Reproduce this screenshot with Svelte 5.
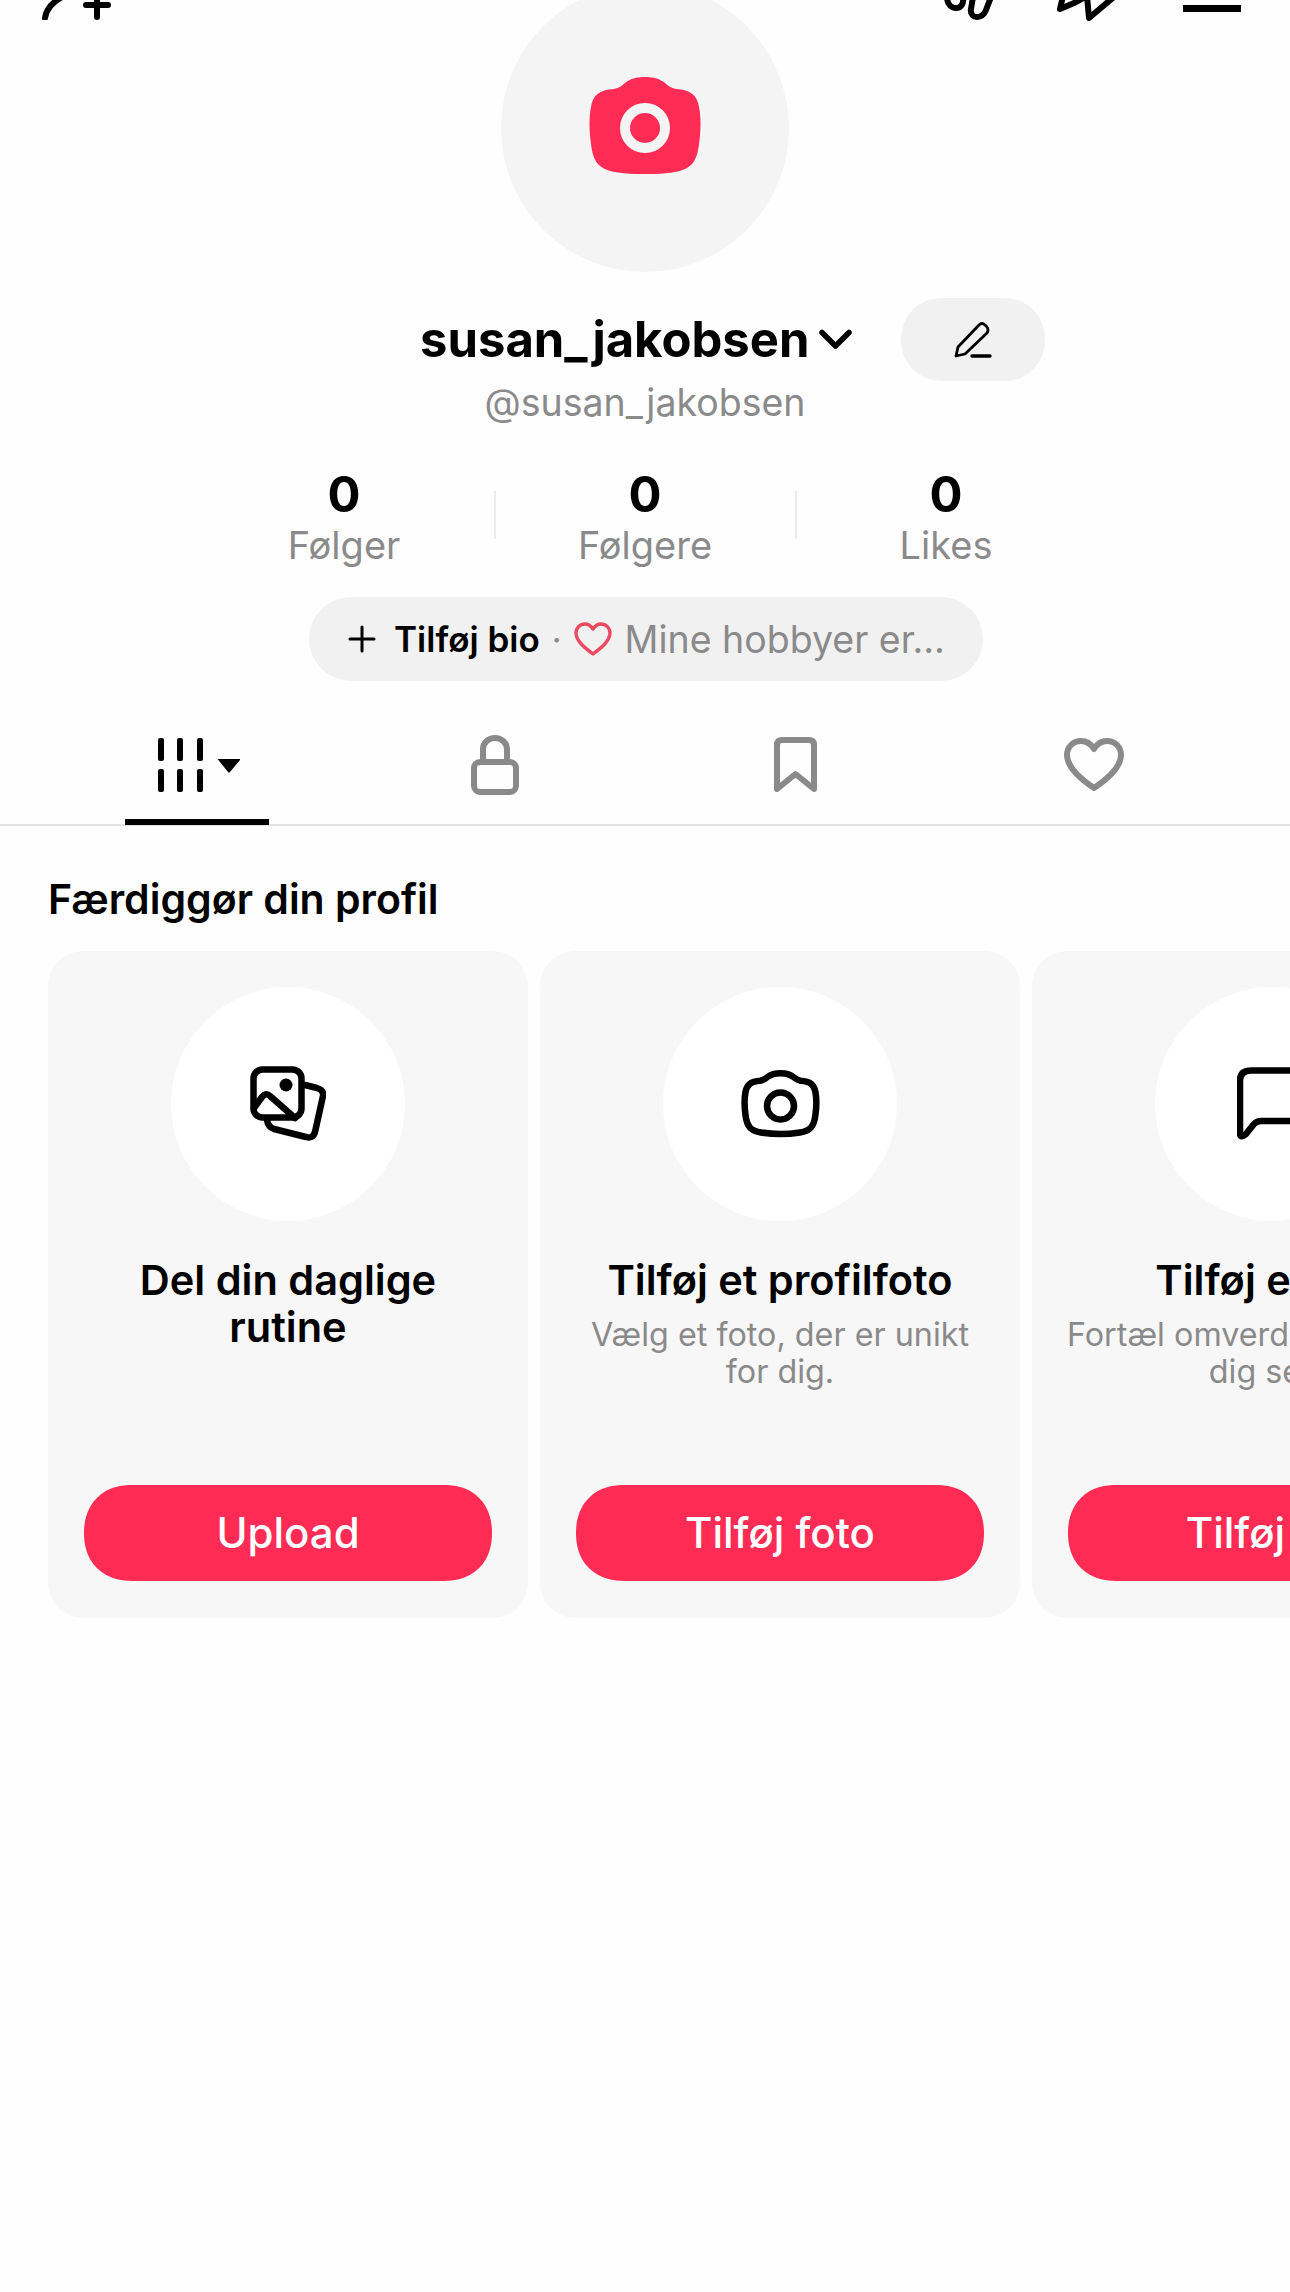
<script>
  const stats = [
    { n: '0', label: 'Følger' },
    { n: '0', label: 'Følgere' },
    { n: '0', label: 'Likes' }
  ];
  const camPath = 'M39.5 3.25C33.7 3.25 29.8 4.5 26.5 7C24.6 8.9 22.7 10.1 19.4 10.7C9.7 11.4 5.8 14.5 4.5 22C3.25 28.2 3.25 35.7 4.5 45C5.8 56.3 9.7 60.7 20 62.5C31.7 64.4 47.2 64.4 58.9 62.5C69.3 60.7 73.1 56.3 74.4 45C75.7 35.7 75.7 28.2 74.4 22C73.1 14.5 69.3 11.4 59.5 10.7C56.3 10.1 54.4 8.9 52.4 7C49.2 4.5 45.3 3.25 39.5 3.25Z';
</script>

<div class="page">
  <header class="topbar">
    <svg class="t-add" width="70" height="20" viewBox="0 0 70 20" fill="none" stroke="#000" stroke-width="6" stroke-linecap="round">
      <path d="M3 18C4 10 9 3 20 -3" />
      <path d="M44 5H66M55 -6V17" />
    </svg>
    <div class="t-right">
      <svg class="t-loops" width="52" height="20" viewBox="0 0 52 20" fill="none" stroke="#000" stroke-width="6" stroke-linecap="round">
        <path d="M3 -3C3 5 8 8 12 8C17 8 20 4 19 -3" />
        <path d="M29 -3L27 9C26 15 30 17 33 17C37 17 40 15 42 10L47 -3" />
      </svg>
      <svg class="t-share" width="60" height="21" viewBox="0 0 60 21" fill="none" stroke="#000" stroke-width="6" stroke-linecap="round" stroke-linejoin="round">
        <path d="M6 -4L3 9L17 3L30 -4L32 18L58 -4" />
      </svg>
      <div class="t-bar"></div>
    </div>
  </header>

  <div class="avatar">
    <svg width="112" height="97" viewBox="0 0 112 97">
      <path fill="#fe2c55" d="M56 0C47 0 41 2 36 6C33 9 30 11 25 12C10 13 4 18 2 30C0 40 0 52 2 67C4 85 10 92 26 95C44 98 68 98 86 95C102 92 108 85 110 67C112 52 112 40 110 30C108 18 102 13 87 12C82 11 79 9 76 6C71 2 65 0 56 0Z" />
      <circle cx="56" cy="51" r="20" fill="none" stroke="#f4f4f5" stroke-width="10" />
    </svg>
  </div>

  <div class="name-row">
    <h1 class="name">susan_jakobsen</h1>
    <svg class="chev" width="33" height="21" viewBox="0 0 33 21" fill="none" stroke="#000" stroke-width="5.5" stroke-linecap="round" stroke-linejoin="round">
      <path d="M3 3.5L16.5 17L30 3.5" />
    </svg>
    <button class="edit" aria-label="Rediger">
      <svg width="38" height="36" viewBox="0 0 38 36" fill="none" stroke="#000" stroke-width="2.8" stroke-linecap="round" stroke-linejoin="round">
        <path d="M2 34L4 25L25 3Q28 0 31 3L33 5Q35 8 33 11L11 32Z" />
        <path d="M18 34H36" stroke-width="3.4" />
      </svg>
    </button>
  </div>

  <p class="handle">@susan_jakobsen</p>

  <div class="stats">
    {#each stats as s, i}
      {#if i > 0}<span class="sep"></span>{/if}
      <div class="stat">
        <strong>{s.n}</strong>
        <span>{s.label}</span>
      </div>
    {/each}
  </div>

  <div class="bio">
    <svg width="28" height="28" viewBox="0 0 28 28" fill="none" stroke="#000" stroke-width="3" stroke-linecap="round">
      <path d="M2 14H26M14 2V26" />
    </svg>
    <b>Tilføj bio</b>
    <span class="dot">·</span>
    <svg width="38" height="34" viewBox="0 0 38 34" fill="none" stroke="#ea4a62" stroke-width="3.4" stroke-linejoin="round">
      <path d="M19 32C11 26 2 19 2 11C2 6 6 2 11 2C15 2 17 4 19 7C21 4 23 2 27 2C32 2 36 6 36 11C36 19 27 26 19 32Z" />
    </svg>
    <span class="hint">Mine hobbyer er...</span>
  </div>

  <nav class="tabs">
    <div class="tab active">
      <svg width="84" height="56" viewBox="0 0 84 56">
        <g fill="#000">
          <rect x="2" y="0" width="6" height="23" rx="2" />
          <rect x="21" y="0" width="6" height="23" rx="2" />
          <rect x="41" y="0" width="6" height="23" rx="2" />
          <rect x="2" y="31" width="6" height="23" rx="2" />
          <rect x="21" y="31" width="6" height="23" rx="2" />
          <rect x="41" y="31" width="6" height="23" rx="2" />
          <path d="M62 21.5Q61 21 62 21H84Q85 21 84 22L74 34Q73 35 72 34Z" />
        </g>
      </svg>
    </div>
    <div class="tab">
      <svg width="48" height="60" viewBox="0 0 48 60" fill="none" stroke="#8a8a8a" stroke-width="6">
        <path d="M12 27V14A12 11 0 0 1 36 14V27" />
        <rect x="3" y="27" width="42" height="30" rx="6" />
      </svg>
    </div>
    <div class="tab">
      <svg width="43" height="55" viewBox="0 0 43 55" fill="none" stroke="#8a8a8a" stroke-width="6" stroke-linejoin="round">
        <path d="M3 8Q3 3 8 3H35Q40 3 40 8V52L21.5 37L3 52Z" />
      </svg>
    </div>
    <div class="tab tab-heart">
      <svg width="60" height="54" viewBox="0 0 60 54" fill="none" stroke="#8a8a8a" stroke-width="6" stroke-linejoin="round">
        <path d="M30 50C18 42 3 30 3 17C3 9 9 3 17 3C23 3 27 6 30 11C33 6 37 3 43 3C51 3 57 9 57 17C57 30 42 42 30 50Z" />
      </svg>
    </div>
  </nav>

  <h2 class="section">Færdiggør din profil</h2>

  <div class="cards">
    <article class="card">
      <div class="circle">
        <svg width="76" height="76" viewBox="0 0 76 76" fill="none" stroke="#000" stroke-width="6.5" stroke-linecap="round" stroke-linejoin="round">
          <rect x="3.5" y="3.5" width="48" height="48" rx="9" />
          <circle cx="36" cy="19" r="6.5" fill="#000" stroke="none" />
          <path d="M4 42L12 31Q16 26 20 30L45 52" />
          <path d="M55 19L67 22Q74 24 73 30L65 66Q63 73 56 71L24 63Q18 61 17 54" />
        </svg>
      </div>
      <h3>Del din daglige rutine</h3>
      <button class="cta">Upload</button>
    </article>

    <article class="card">
      <div class="circle">
        <svg width="79" height="68" viewBox="0 0 79 68" fill="none" stroke="#000" stroke-width="6.5">
          <path d={camPath} />
          <circle cx="39.5" cy="36" r="13.5" />
        </svg>
      </div>
      <h3>Tilføj et profilfoto</h3>
      <p>Vælg et foto, der er unikt for dig.</p>
      <button class="cta">Tilføj foto</button>
    </article>

    <article class="card">
      <div class="circle">
        <svg class="bubble" width="80" height="75" viewBox="0 0 80 75" fill="none" stroke="#000" stroke-width="6.5" stroke-linejoin="round">
          <path d="M14 3.5H66Q77 3.5 77 14V43Q77 54 66 54H24Q20 54 17 57L9 67Q3 72 3 66V14Q3 3.5 14 3.5Z" />
        </svg>
      </div>
      <h3>Tilføj en bio</h3>
      <p class="nowrap">Fortæl omverdenen lidt om<br />dig selv.</p>
      <button class="cta">Tilføj bio</button>
    </article>
  </div>
</div>

<style>
  :global(body) {
    margin: 0;
    background: #fff;
  }
  .page {
    width: 1290px;
    height: 2292px;
    overflow: hidden;
    display: flex;
    flex-direction: column;
    font-family: Inter, "Liberation Sans", sans-serif;
    color: #000;
    background: #fefefe;
  }
  .topbar {
    height: 21px;
    padding: 0 49px 0 42px;
    display: flex;
    justify-content: space-between;
    align-items: flex-start;
  }
  .t-right {
    display: flex;
    align-items: flex-start;
    gap: 66px;
  }
  .t-share {
    margin-left: -5px;
  }
  .t-bar {
    width: 58px;
    height: 7px;
    margin-top: 5px;
    background: #000;
  }
  .avatar {
    width: 288px;
    height: 288px;
    box-sizing: border-box;
    padding-bottom: 5px;
    margin: -37px auto 0;
    border-radius: 50%;
    background: #f4f4f5;
    display: flex;
    align-items: center;
    justify-content: center;
    flex: none;
  }
  .name-row {
    margin-top: 26px;
    height: 83px;
    padding-left: 420px;
    display: flex;
    align-items: center;
    flex: none;
  }
  .name {
    margin: 0;
    font-size: 49px;
    line-height: 83px;
    font-weight: 700;
    width: 389px;
    white-space: nowrap;
  }
  .chev {
    margin-left: 10px;
    flex: none;
  }
  .edit {
    margin-left: 49px;
    width: 144px;
    height: 83px;
    flex: none;
    border: 0;
    padding: 0;
    border-radius: 40px;
    background: #f1f1f2;
    display: flex;
    align-items: center;
    justify-content: center;
  }
  .handle {
    margin: 0;
    text-align: center;
    font-size: 37.5px;
    line-height: 44px;
    height: 44px;
    color: #8a8a8a;
    flex: none;
  }
  .stats {
    margin-top: 45px;
    display: flex;
    justify-content: center;
    align-items: flex-start;
    flex: none;
  }
  .stat {
    width: 299px;
    display: flex;
    flex-direction: column;
    align-items: center;
  }
  .stat strong {
    font-size: 49px;
    line-height: 50px;
    font-weight: 700;
  }
  .stat span {
    margin-top: 2px;
    font-size: 38px;
    line-height: 46px;
    color: #8a8a8a;
  }
  .sep {
    width: 2px;
    height: 48px;
    margin-top: 21px;
    background: #ececed;
    flex: none;
  }
  .bio {
    margin: 29px 0 0 309px;
    width: 674px;
    height: 84px;
    box-sizing: border-box;
    padding-left: 39px;
    border-radius: 42px;
    background: #f1f1f2;
    display: flex;
    align-items: center;
    flex: none;
    white-space: nowrap;
  }
  .bio b {
    margin-left: 18px;
    font-size: 35px;
    font-weight: 600;
  }
  .dot {
    margin: 0 12px;
    font-size: 34px;
    color: #8a8a8a;
  }
  .hint {
    margin-left: 13px;
    font-size: 37.5px;
    color: #8a8a8a;
  }
  .tabs {
    margin-top: 21px;
    padding-left: 45px;
    height: 124px;
    box-sizing: border-box;
    border-bottom: 2px solid #e3e3e4;
    display: flex;
    flex: none;
  }
  .tab {
    width: 300px;
    height: 122px;
    box-sizing: border-box;
    display: flex;
    align-items: center;
    justify-content: center;
    position: relative;
  }
  .tab svg {
    margin-top: 3px;
  }
  .tab.active svg {
    margin: 6px 0 0 6px;
  }
  .tab-heart svg {
    margin-right: 3px;
  }
  .tab.active::after {
    content: '';
    position: absolute;
    left: 80px;
    width: 144px;
    bottom: -1px;
    height: 6px;
    background: #000;
  }
  .section {
    margin: 48px 0 0 48px;
    font-size: 41px;
    line-height: 50px;
    font-weight: 600;
    flex: none;
  }
  .cards {
    margin-top: 27px;
    padding-left: 48px;
    display: flex;
    gap: 12px;
    flex: none;
  }
  .card {
    width: 480px;
    height: 667px;
    flex: none;
    box-sizing: border-box;
    padding: 36px 36px 37px;
    border-radius: 38px;
    corner-shape: superellipse(1.15);
    background: #f7f7f7;
    display: flex;
    flex-direction: column;
    align-items: center;
    text-align: center;
  }
  .circle {
    width: 234px;
    height: 234px;
    border-radius: 50%;
    background: #fff;
    flex: none;
    display: flex;
    align-items: center;
    justify-content: center;
  }
  .bubble {
    margin-left: 10px;
  }
  .card h3 {
    margin: 36px 0 0;
    font-size: 41.5px;
    line-height: 47px;
    font-weight: 600;
  }
  .card p {
    margin: 12px 0 0;
    font-size: 32.3px;
    line-height: 37px;
    color: #8a8a8a;
  }
  .card p.nowrap {
    white-space: nowrap;
  }
  .cta {
    margin-top: auto;
    width: 408px;
    height: 96px;
    flex: none;
    border: 0;
    border-radius: 48px;
    corner-shape: superellipse(1.15);
    background: #fe2c55;
    color: #fff;
    font: 500 42px/96px Inter, "Liberation Sans", sans-serif;
    padding: 0;
  }
</style>
